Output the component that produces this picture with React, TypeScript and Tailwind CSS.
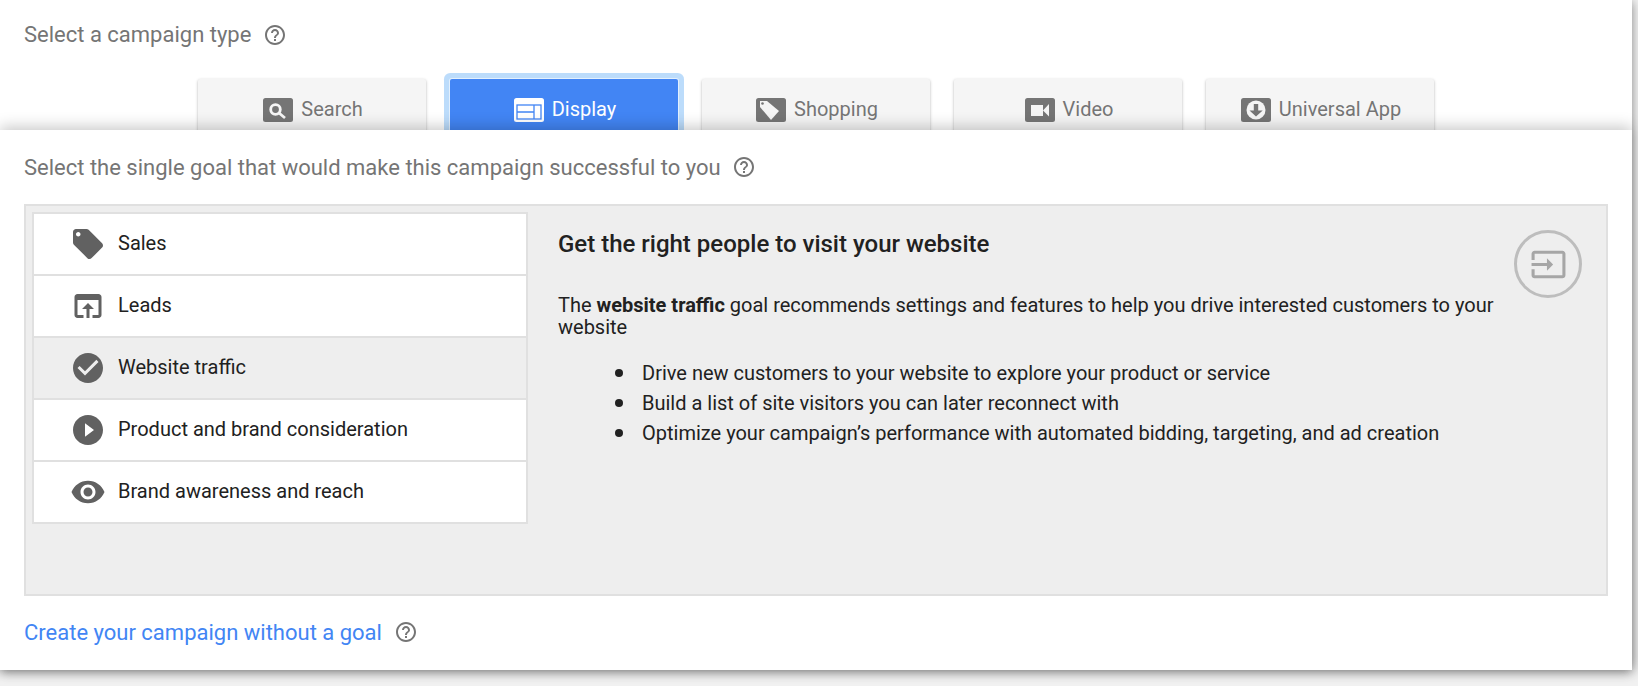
const P = {
  tag: "M21.41 11.58l-9-9C12.05 2.22 11.55 2 11 2H4c-1.1 0-2 .9-2 2v7c0 .55.22 1.05.59 1.42l9 9c.36.36.86.58 1.41.58.55 0 1.05-.22 1.41-.59l7-7c.37-.36.59-.86.59-1.41 0-.55-.23-1.06-.59-1.42zM5.5 7C4.67 7 4 6.33 4 5.5S4.67 4 5.5 4 7 4.67 7 5.5 6.33 7 5.5 7z",
  browser: "M19 4H5c-1.11 0-2 .9-2 2v12c0 1.1.89 2 2 2h4v-2H5V8h14v10h-4v2h4c1.1 0 2-.9 2-2V6c0-1.1-.89-2-2-2zm-7 6l-4 4h3v6h2v-6h3l-4-4z",
  check: "M12 2C6.48 2 2 6.48 2 12s4.48 10 10 10 10-4.48 10-10S17.52 2 12 2zm-2 15l-5-5 1.41-1.41L10 14.17l7.59-7.59L19 8l-9 9z",
  play: "M12 2C6.48 2 2 6.48 2 12s4.48 10 10 10 10-4.48 10-10S17.52 2 12 2zm-2 14.5v-9l6 4.5-6 4.5z",
  eye: "M12 4.5C7 4.5 2.73 7.61 1 12c1.73 4.39 6 7.5 11 7.5s9.27-3.11 11-7.5c-1.73-4.39-6-7.5-11-7.5zM12 17c-2.76 0-5-2.24-5-5s2.24-5 5-5 5 2.24 5 5-2.24 5-5 5zm0-8c-1.66 0-3 1.34-3 3s1.34 3 3 3 3-1.34 3-3-1.34-3-3-3z",
  help: "M11 18h2v-2h-2v2zm1-16C6.48 2 2 6.48 2 12s4.48 10 10 10 10-4.48 10-10S17.52 2 12 2zm0 18c-4.41 0-8-3.59-8-8s3.59-8 8-8 8 3.59 8 8-3.59 8-8 8zm0-14c-2.21 0-4 1.79-4 4h2c0-1.1.9-2 2-2s2 .9 2 2c0 2-3 1.75-3 5h2c0-2.25 3-2.5 3-5 0-2.21-1.79-4-4-4z",
  input: "M21 3.01H3c-1.1 0-2 .9-2 2V9h2V4.99h18v14.03H3V15H1v4.01c0 1.1.9 1.98 2 1.98h18c1.1 0 2-.88 2-1.98v-14c0-1.11-.9-2-2-2zM11 16l4-4-4-4v3H1v2h10v3z",
}

function Mi({ d, className }: { d: string; className: string }) {
  return <svg viewBox="0 0 24 24" className={className} fill="currentColor"><path d={d} /></svg>
}

function Help({ className = "ml-3" }: { className?: string }) {
  return <Mi d={P.help} className={`w-[24px] h-[24px] text-[#757575] ${className}`} />
}

function TypeIcon({ type, active }: { type: string; active?: boolean }) {
  const bg = active ? "#ffffff" : "#757575"
  const fg = active ? "#4285f4" : "#f5f5f5"
  return (
    <svg viewBox="0 0 30 24" className="w-[30px] h-[24px] mr-[8px]">
      <rect width="30" height="24" rx="2.5" fill={bg} />
      {type === "Search" && (
        <g fill="none" stroke={fg} strokeWidth="2.8">
          <circle cx="12.5" cy="11.5" r="4.8" />
          <path d="M16 15l6 5" />
        </g>
      )}
      {type === "Display" && (
        <g fill="none" stroke={fg} strokeWidth="1.3">
          <rect x="3" y="7" width="24" height="14" />
          <path d="M20 7v14M3 14h17" />
        </g>
      )}
      {type === "Shopping" && (
        <g fill={fg}>
          <path d="M4 3h7l12 10-8 9L4 9z" />
          <circle cx="6.5" cy="5.5" r="1.3" fill={bg} />
        </g>
      )}
      {type === "Video" && (
        <g fill={fg}>
          <rect x="6" y="7" width="12" height="11" />
          <path d="M18 12.5l6-6.5v12.5z" />
        </g>
      )}
      {type === "Universal App" && (
        <g>
          <circle cx="15" cy="12" r="9.5" fill={fg} />
          <path d="M12.8 6h4.4v6.5h4.5L15 18.5l-6.5-6h4.3z" fill={bg} />
        </g>
      )}
    </svg>
  )
}

const types = ["Search", "Display", "Shopping", "Video", "Universal App"]

const goals = [
  { label: "Sales", icon: P.tag },
  { label: "Leads", icon: P.browser },
  { label: "Website traffic", icon: P.check, selected: true },
  { label: "Product and brand consideration", icon: P.play },
  { label: "Brand awareness and reach", icon: P.eye },
]

const bullets = [
  "Drive new customers to your website to explore your product or service",
  "Build a list of site visitors you can later reconnect with",
  "Optimize your campaign’s performance with automated bidding, targeting, and ad creation",
]

export default function App() {
  return (
    <div className="h-screen overflow-hidden bg-[#f1f1f1] font-['Roboto',sans-serif]">
      <div className="w-[1632px] h-[670px] bg-white flex flex-col shadow-[0_2px_10px_rgba(0,0,0,0.45)]">
        {/* Campaign type */}
        <div className="h-[130px] shrink-0 overflow-hidden px-[24px]">
          <div className="h-[79px] flex items-start pt-[23px]">
            <span className="text-[22px] leading-[24px] text-[#757575]">Select a campaign type</span>
            <Help />
          </div>
          <div className="flex justify-center gap-[24px]">
            {types.map((t) =>
              t === "Display" ? (
                <div key={t} className="w-[228px] h-[70px] bg-[#4285f4] text-white rounded-[2px] flex items-start justify-center pt-[19px] pl-[2px] text-[20px] leading-[24px] shadow-[0_0_0_1px_#e3f0fd,0_0_0_6px_#bcdcfb]">
                  <TypeIcon type={t} active />
                  <span className="-mt-[1px]">{t}</span>
                </div>
              ) : (
                <div key={t} className="w-[228px] h-[70px] bg-[#f5f5f5] text-[#757575] rounded-[2px] flex items-start justify-center pt-[19px] pl-[2px] text-[20px] leading-[24px] shadow-[0_1px_3px_rgba(0,0,0,0.3)]">
                  <TypeIcon type={t} />
                  <span className="-mt-[1px]">{t}</span>
                </div>
              )
            )}
          </div>
        </div>

        {/* Goal panel */}
        <div className="relative flex-1 bg-white px-[24px] pt-[25px] shadow-[0_-3px_14px_rgba(0,0,0,0.22)]">
          <div className="flex items-center h-[24px] text-[22px] text-[#757575]">
            Select the single goal that would make this campaign successful to you
            <Help className="ml-[11px]" />
          </div>

          <div className="mt-[25px] h-[392px] w-[1584px] bg-[#eeeeee] border-2 border-[#e0e0e0] pl-[6px] pt-[6px] pr-[7px] flex">
            <div className="w-[496px] h-[312px] shrink-0 bg-[#e0e0e0] border-2 border-[#e0e0e0] flex flex-col gap-[2px]">
              {goals.map((g) => (
                <div key={g.label} className={`flex-1 flex items-center pl-[36px] ${g.selected ? "bg-[#eeeeee]" : "bg-white"}`}>
                  <Mi d={g.icon} className="w-[36px] h-[36px] text-[#616161]" />
                  <span className="ml-[12px] -mt-[2px] text-[20px] text-[#212121]">{g.label}</span>
                </div>
              ))}
            </div>
            <div className="flex-1 flex pl-[30px] pt-[18px] text-[#212121]">
              <div className="w-[940px] text-[20px] leading-[22px]">
                <h2 className="text-[24px] leading-[28px] font-medium">Get the right people to visit your website</h2>
                <p className="mt-[36px]">
                  The <b className="font-bold">website traffic</b> goal recommends settings and features to help you drive interested customers to your website
                </p>
                <ul className="mt-[20px] pl-[57px] leading-[30px]">
                  {bullets.map((b) => (
                    <li key={b} className="flex items-center">
                      <span className="w-[8px] h-[8px] shrink-0 mr-[19px] rounded-full bg-[#212121]" />
                      {b}
                    </li>
                  ))}
                </ul>
              </div>
              <div className="ml-auto mr-[17px] mt-0 w-[68px] h-[68px] rounded-full border-[3px] border-[#bdbdbd] flex items-center justify-center">
                <Mi d={P.input} className="w-[37px] h-[37px] text-[#a6a6a6]" />
              </div>
            </div>
          </div>

          <div className="flex items-center mt-[24px] h-[24px]">
            <a className="text-[22px] text-[#4285f4]">Create your campaign without a goal</a>
            <Help className="ml-[12px]" />
          </div>
        </div>
      </div>
    </div>
  )
}
